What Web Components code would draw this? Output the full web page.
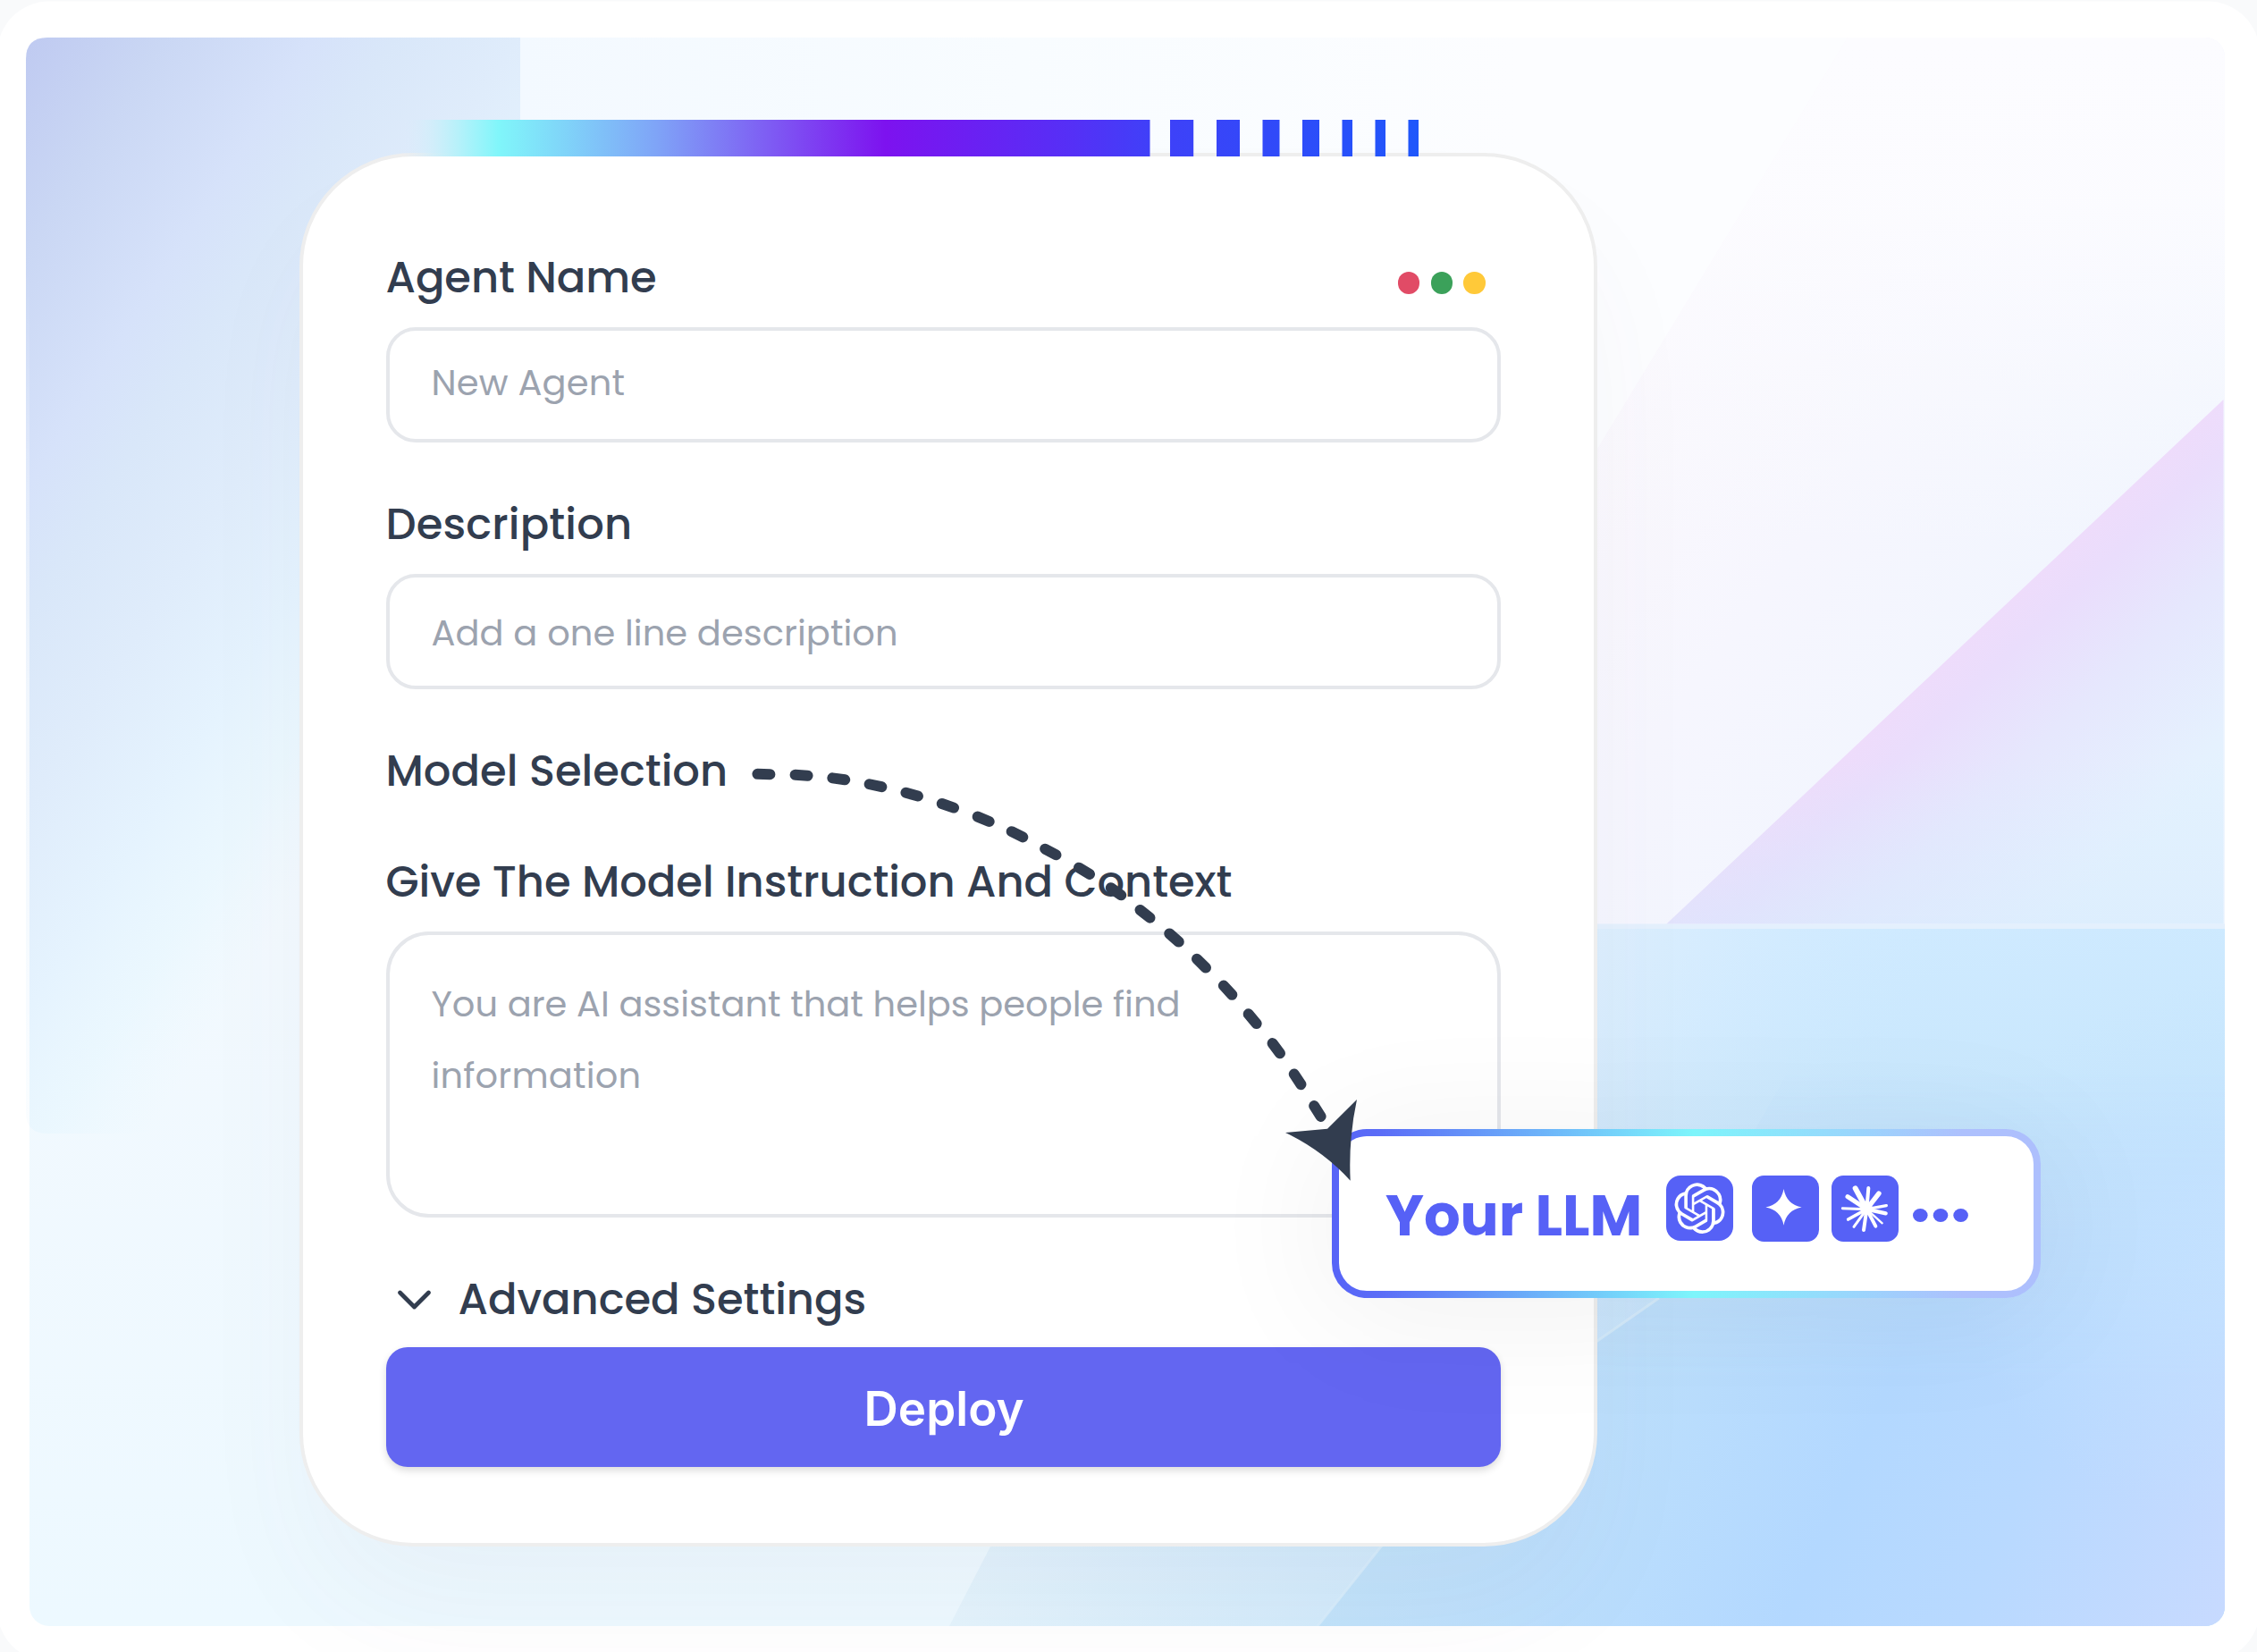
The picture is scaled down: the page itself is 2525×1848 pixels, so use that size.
<!DOCTYPE html>
<html lang="en">
<head>
<meta charset="utf-8">
<title>Agent builder</title>
<style>
  html, body { margin: 0; height: 100%; overflow: hidden; background: #f9fafb; }
  body { font-family: Poppins, Inter, "Open Sans", sans-serif; color: #323d4f; }
</style>
</head>
<body>
<agent-stage>
  <stage-backdrop slot="backdrop"></stage-backdrop>
  <accent-bar slot="overlay"></accent-bar>
  <agent-card>
    <form-field label="Agent Name" label-width="300.5" text-top="28"><fit-text width="213">New Agent</fit-text></form-field>
    <form-field label="Description" label-width="269.5" text-top="32"><fit-text width="518.5">Add a one line description</fit-text></form-field>
    <field-label><fit-text width="376.5">Model Selection</fit-text></field-label>
    <form-field tall label="Give The Model Instruction And Context" label-width="945" text-top="37"><fit-text width="835">You are AI assistant that helps people find</fit-text><fit-text width="230">information</fit-text></form-field>
    <advanced-toggle><fit-text width="454">Advanced Settings</fit-text></advanced-toggle>
    <deploy-button><fit-text width="176">Deploy</fit-text></deploy-button>
  </agent-card>
  <llm-badge slot="overlay"><fit-text width="283.5">Your LLM</fit-text></llm-badge>
  <dash-arrow slot="overlay"></dash-arrow>
</agent-stage>

<script>
const define = (name, html, setup) => {
  const tpl = document.createElement('template');
  tpl.innerHTML = html;
  customElements.define(name, class extends HTMLElement {
    constructor() {
      super();
      this.attachShadow({ mode: 'open' }).append(tpl.content.cloneNode(true));
    }
    connectedCallback() { if (setup) setup(this, this.shadowRoot); }
  });
};

define('agent-stage', `
<style>
  :host { display: grid; position: relative; width: 2525px; height: 1848px; overflow: hidden; }
  .content { grid-area: 1 / 1; padding: 171px 0 0 335px; position: relative; z-index: 1; }
  ::slotted([slot=backdrop]) { grid-area: 1 / 1; }
</style>
<slot name="backdrop"></slot>
<div class="content"><slot></slot></div>
<slot name="overlay"></slot>`);

define('stage-backdrop', `
<style>:host { display: block; } svg { display: block; }</style>
<svg width="2525" height="1848" viewBox="0 0 2525 1848">
  <defs>
    <clipPath id="panel"><rect x="33" y="42" width="2456" height="1777" rx="22"/></clipPath>
    <linearGradient id="base" gradientUnits="userSpaceOnUse" x1="0" y1="42" x2="0" y2="1819">
      <stop offset="0" stop-color="#f6fafe"/><stop offset=".5" stop-color="#f3f9fe"/><stop offset="1" stop-color="#edf9ff"/>
    </linearGradient>
    <linearGradient id="topband" gradientUnits="userSpaceOnUse" x1="582" y1="0" x2="1700" y2="0">
      <stop offset="0" stop-color="#f3f9ff"/><stop offset=".5" stop-color="#f8fcff"/><stop offset="1" stop-color="#fcfdff"/>
    </linearGradient>
    <linearGradient id="lilac" gradientUnits="userSpaceOnUse" x1="1760" y1="500" x2="2300" y2="900">
      <stop offset="0" stop-color="#fbf8fd"/><stop offset=".4" stop-color="#f6f6fe"/><stop offset="1" stop-color="#eff5fe"/>
    </linearGradient>
    <linearGradient id="lilacTop" gradientUnits="userSpaceOnUse" x1="0" y1="42" x2="0" y2="620">
      <stop offset="0" stop-color="#fcfcff"/><stop offset=".3" stop-color="#fcfcff" stop-opacity=".9"/><stop offset="1" stop-color="#f8faff" stop-opacity="0"/>
    </linearGradient>
    <linearGradient id="wedge" gradientUnits="userSpaceOnUse" x1="2176" y1="740" x2="2386" y2="963">
      <stop offset="0" stop-color="#eedcfb"/><stop offset=".14" stop-color="#eaddfc"/><stop offset=".45" stop-color="#e6e7fd"/><stop offset=".9" stop-color="#e5f1fe"/><stop offset="1" stop-color="#e4f2fe"/>
    </linearGradient>
    <linearGradient id="wedgeLow" gradientUnits="userSpaceOnUse" x1="0" y1="850" x2="0" y2="1033">
      <stop offset="0" stop-color="#d6eafd" stop-opacity="0"/><stop offset="1" stop-color="#d6eafd" stop-opacity=".5"/>
    </linearGradient>
    <linearGradient id="lower" gradientUnits="userSpaceOnUse" x1="1050" y1="1819" x2="1700" y2="1500">
      <stop offset="0" stop-color="#e5f4fc"/><stop offset=".55" stop-color="#d3ebfb"/><stop offset="1" stop-color="#cbe6f9"/>
    </linearGradient>
    <linearGradient id="right" gradientUnits="userSpaceOnUse" x1="2120" y1="1039" x2="2180" y2="1560">
      <stop offset="0" stop-color="#cfeaff"/><stop offset=".4" stop-color="#c8e7fd"/><stop offset="1" stop-color="#c0e1fc"/>
    </linearGradient>
    <linearGradient id="rightPale" gradientUnits="userSpaceOnUse" x1="1787" y1="1039" x2="2120" y2="1180">
      <stop offset="0" stop-color="#dfeffd" stop-opacity=".9"/><stop offset="1" stop-color="#cfeaff" stop-opacity="0"/>
    </linearGradient>
    <linearGradient id="deep" gradientUnits="userSpaceOnUse" x1="1560" y1="1500" x2="2489" y2="1900">
      <stop offset="0" stop-color="#c3e4f9"/><stop offset=".25" stop-color="#bcdffc"/><stop offset=".52" stop-color="#b3d8ff"/><stop offset=".7" stop-color="#b8d9ff"/><stop offset="1" stop-color="#c9daff"/>
    </linearGradient>
    <radialGradient id="edge" gradientUnits="userSpaceOnUse" cx="2489" cy="1400" r="300">
      <stop offset="0" stop-color="#c4e2ff" stop-opacity=".75"/><stop offset="1" stop-color="#c4e2ff" stop-opacity="0"/>
    </radialGradient>
    <linearGradient id="deepFade" gradientUnits="userSpaceOnUse" x1="0" y1="1200" x2="0" y2="1540">
      <stop offset="0" stop-color="#fff" stop-opacity="0"/><stop offset="1" stop-color="#fff"/>
    </linearGradient>
    <mask id="deepMask" maskUnits="userSpaceOnUse" x="1400" y="1000" width="1125" height="848"><rect x="1400" y="1000" width="1125" height="848" fill="url(#deepFade)"/></mask>
    <linearGradient id="corner" gradientUnits="userSpaceOnUse" x1="29" y1="42" x2="681" y2="457">
      <stop offset="0" stop-color="#bfcaf1"/><stop offset=".17" stop-color="#cad7f4"/><stop offset=".35" stop-color="#d6e2fa"/><stop offset=".45" stop-color="#d9e7f9"/><stop offset=".6" stop-color="#dfecfb"/><stop offset=".76" stop-color="#e5f3fe"/><stop offset=".88" stop-color="#e9f7fe" stop-opacity=".8"/><stop offset="1" stop-color="#ecf8ff" stop-opacity="0"/>
    </linearGradient>
    <linearGradient id="strip" gradientUnits="userSpaceOnUse" x1="0" y1="300" x2="0" y2="1268">
      <stop offset="0" stop-color="#fff" stop-opacity="0"/><stop offset=".5" stop-color="#fff" stop-opacity=".6"/><stop offset="1" stop-color="#fff" stop-opacity=".75"/>
    </linearGradient>
  </defs>
  <rect x="-3" y="1.500" width="2531" height="1857" rx="58" fill="#fff"/>
  <g clip-path="url(#panel)">
    <rect x="33" y="42" width="2456" height="1777" fill="url(#base)"/>
    <path d="M582 42H2489V1039H582z" fill="url(#topband)"/>
    <path d="M1787 502L2067 42H2489V1039H1600V790z" fill="url(#lilac)"/>
    <path d="M1787 502L2067 42H2489V700H1787z" fill="url(#lilacTop)"/>
    <path d="M1864.500 1033.500L2487.500 447V1033.500z" fill="url(#wedge)"/>
    <path d="M1864.500 1033.500L2059.500 850H2487.500V1033.500z" fill="url(#wedgeLow)"/>
    <path d="M1700 1033.500H2489V1039H1700z" fill="#e4f0fd"/>
    <path d="M1108 1730L1062 1819H2489V1400H1300z" fill="url(#lower)"/>
    <rect x="1700" y="1039" width="789" height="780" fill="url(#right)"/>
    <rect x="1700" y="1039" width="789" height="780" fill="url(#rightPale)"/>
    <path d="M1474 1819L1545 1730Q1660 1590 1787 1500L1856 1452L2000 1200H2489V1819z" fill="url(#deep)" mask="url(#deepMask)"/>
    <path d="M1474 1819L1545 1730Q1660 1590 1787 1500L1856 1452" fill="none" stroke="#d8edfb" stroke-width="3" opacity=".8"/>
    <rect x="2180" y="1100" width="309" height="610" fill="url(#edge)"/>
  </g>
  <path d="M53 42H582V1268H53Q29 1268 29 1244V66Q29 42 53 42z" fill="url(#corner)"/>
  <rect x="27" y="300" width="6" height="970" fill="url(#strip)"/>
</svg>`);

define('accent-bar', `
<style>
  :host { position: absolute; left: 450px; top: 134px; z-index: 2; display: block; }
  svg { display: block; }
</style>
<svg width="1138" height="41" viewBox="450 0 1138 41">
  <defs><linearGradient id="g" gradientUnits="userSpaceOnUse" x1="450" y1="0" x2="1588" y2="0">
    <stop offset="0" stop-color="#dcebfb" stop-opacity="0"/><stop offset=".03" stop-color="#cfeefa" stop-opacity=".85"/><stop offset=".055" stop-color="#b6f1fa"/><stop offset=".095" stop-color="#80f6fa"/>
    <stop offset=".25" stop-color="#7fa4f7"/><stop offset=".475" stop-color="#7d12ef"/><stop offset=".66" stop-color="#5530f6"/><stop offset=".735" stop-color="#4040f8"/>
    <stop offset=".86" stop-color="#304af9"/><stop offset="1" stop-color="#1f57fb"/>
  </linearGradient></defs>
  <path fill="url(#g)" d="M450 0H1286.500V41H450zM1309 0h26.200v41h-26.200zM1361 0h26v41h-26zM1412.500 0h19v41h-19zM1457 0h19v41h-19zM1501.500 0h11.500v41h-11.500zM1538.500 0h11.500v41h-11.500zM1575.500 0h11.500v41h-11.500z"/>
</svg>`);

define('agent-card', `
<style>
  :host { display: flex; flex-direction: column; box-sizing: border-box; position: relative;
    width: 1452px; height: 1559px; padding: 105px 105px 0 92.500px; background: #fff;
    border: 4px solid #eeeeee; border-radius: 127px;
    box-shadow: 0 80px 150px -20px rgba(90, 80, 120, .05); }
  .dots { position: absolute; right: 121.500px; top: 129px; display: flex; gap: 12.300px; }
  .dots i { width: 24.300px; height: 24.500px; border-radius: 50%; }
</style>
<div class="dots"><i style="background:#e14b66"></i><i style="background:#3ba15a"></i><i style="background:#ffc939"></i></div>
<slot></slot>`);

define('fit-text', `
<style>:host { display: block; white-space: nowrap; width: max-content; }</style>
<slot></slot>`, host => {
  // Spreads the letters so the drawn glyphs span the given width.
  host.fit = () => {
    const cs = getComputedStyle(host);
    const ctx = document.createElement('canvas').getContext('2d');
    ctx.font = cs.fontWeight + ' ' + cs.fontSize + ' ' + cs.fontFamily;
    const text = host.textContent;
    const m = ctx.measureText(text);
    const left = -m.actualBoundingBoxLeft;
    const rightGap = m.width - m.actualBoundingBoxRight;
    const natural = host.getBoundingClientRect().width - left - rightGap;
    host.style.letterSpacing = (host.getAttribute('width') - natural) / (text.length - 1) + 'px';
  };
});

define('field-label', `
<style>:host { display: block; font-size: 48px; font-weight: 500; line-height: 61px; height: 60px; margin-bottom: 64px; }
</style><slot></slot>`);

define('form-field', `
<style>
  :host { display: block; margin-bottom: 61px; }
  field-label { margin-bottom: 26px; }
  .box { box-sizing: border-box; width: 1247px; height: 129px; border: 4px solid #e5e7eb; border-radius: 33px;
    padding-left: 47px; font-size: 40px; font-weight: 400; line-height: 60px; color: #9ca3af; }
  :host([tall]) .box { height: 320px; border-radius: 48px; line-height: 80px; }
</style>
<field-label><fit-text></fit-text></field-label>
<div class="box"><slot></slot></div>`, (host, root) => {
  const label = root.querySelector('fit-text');
  label.textContent = host.getAttribute('label');
  label.setAttribute('width', host.getAttribute('label-width'));
  root.querySelector('.box').style.paddingTop = host.getAttribute('text-top') + 'px';
});

define('advanced-toggle', `
<style>
  :host { display: flex; height: 60px; line-height: 61px; font-size: 48px; font-weight: 500; padding-left: 10px; margin-bottom: 24px; }
  svg { width: 46px; height: 60px; margin-right: 25px; }
</style>
<svg viewBox="0 0 46 60" fill="none" stroke="#323d4f" stroke-width="4.800" stroke-linecap="round" stroke-linejoin="round"><path d="M5.500 23L21.500 39L37.500 23"/></svg>
<slot></slot>`);

define('deploy-button', `
<style>
  :host { display: flex; box-sizing: border-box; width: 1247px; height: 134px; padding: 33.500px 0 0 535px; border-radius: 24px;
    background: #6366f1; color: #fff; font: 600 53px/70px Inter, sans-serif; box-shadow: 0 4px 8px rgba(0,0,0,.14); }
</style><slot></slot>`);

define('model-tile', `
<style>:host { display: block; width: 75px; height: 74px; } svg { display: block; width: 75px; height: 74px; }</style>
<svg viewBox="0 0 225 222"></svg>`, (host, root) => {
  const openai = 'M22.2819 9.8211a5.9847 5.9847 0 0 0-.5157-4.9108 6.0462 6.0462 0 0 0-6.5098-2.9A6.0651 6.0651 0 0 0 4.9807 4.1818a5.9847 5.9847 0 0 0-3.9977 2.9 6.0462 6.0462 0 0 0 .7427 7.0966 5.98 5.98 0 0 0 .511 4.9107 6.051 6.051 0 0 0 6.5146 2.9001A5.9847 5.9847 0 0 0 13.2599 24a6.0557 6.0557 0 0 0 5.7718-4.2058 5.9894 5.9894 0 0 0 3.9977-2.9001 6.0557 6.0557 0 0 0-.7475-7.0729zm-9.022 12.6081a4.4755 4.4755 0 0 1-2.8764-1.0408l.1419-.0804 4.7783-2.7582a.7948.7948 0 0 0 .3927-.6813v-6.7369l2.02 1.1686a.071.071 0 0 1 .038.052v5.5826a4.504 4.504 0 0 1-4.4945 4.4944zm-9.6607-4.1254a4.4708 4.4708 0 0 1-.5346-3.0137l.142.0852 4.783 2.7582a.7712.7712 0 0 0 .7806 0l5.8428-3.3685v2.3324a.0804.0804 0 0 1-.0332.0615L9.74 19.9502a4.4992 4.4992 0 0 1-6.1408-1.6464zM2.3408 7.8956a4.485 4.485 0 0 1 2.3655-1.9728V11.6a.7664.7664 0 0 0 .3879.6765l5.8144 3.3543-2.0201 1.1685a.0757.0757 0 0 1-.071 0l-4.8303-2.7865A4.504 4.504 0 0 1 2.3408 7.872zm16.5963 3.8558L13.1038 8.364 15.1192 7.2a.0757.0757 0 0 1 .071 0l4.8303 2.7913a4.4944 4.4944 0 0 1-.6765 8.1042v-5.6772a.79.79 0 0 0-.407-.667zm2.0107-3.0231l-.142-.0852-4.7735-2.7818a.7759.7759 0 0 0-.7854 0L9.409 9.2297V6.8974a.0662.0662 0 0 1 .0284-.0615l4.8303-2.7866a4.4992 4.4992 0 0 1 6.6802 4.66zM8.3065 12.863l-2.02-1.1638a.0804.0804 0 0 1-.038-.0567V6.0742a4.4992 4.4992 0 0 1 7.3757-3.4537l-.142.0805L8.704 5.459a.7948.7948 0 0 0-.3927.6813zm1.0976-2.3654l2.602-1.4998 2.6069 1.4998v2.9994l-2.5974 1.4997-2.6067-1.4997Z';
  const rays = [[80,43,18],[124,42,12],[159,60,16],[184,101,10],[182,127,13],[170,160,7],[148,170,12],[108,183,12],[75,172,9],[56,147,11],[37,110,9],[54,71,15]];
  const kinds = {
    knot: '<rect width="225" height="219" rx="48" fill="#5661f6"/><g transform="translate(27.500 25) scale(7.080)"><path fill="#fff" d="' + openai + '"/></g>',
    spark: '<rect width="225" height="222" rx="40" fill="#5661f6"/><path fill="#fff" d="M106.500 45Q116 97 167 106.500Q116 116 106.500 167Q97 116 46 106.500Q97 97 106.500 45z"/>',
    burst: '<rect width="225" height="222" rx="40" fill="#5661f6"/><g stroke="#fff" stroke-linecap="round">' +
      rays.map(r => '<path d="M118 113L' + r[0] + ' ' + r[1] + '" stroke-width="' + r[2] + '"/>').join('') + '</g><circle cx="118" cy="112" r="20" fill="#fff"/>'
  };
  root.querySelector('svg').innerHTML = kinds[host.getAttribute('kind')];
});

define('llm-badge', `
<style>
  :host { position: absolute; left: 1490px; top: 1263px; z-index: 3; box-sizing: border-box; width: 793px; height: 189px;
    border: 8px solid transparent; border-radius: 39px;
    background: linear-gradient(#fff, #fff) padding-box, linear-gradient(90deg, #5764f7 0%, #5b6df7 7%, #7df5fb 51%, #adc0fd 89%, #adbffd 100%) border-box;
    box-shadow: 0 14px 150px 10px rgba(0,0,0,.055);
    display: flex; padding: 44px 0 0 52px; color: #5661f6; font-size: 64px; font-weight: 700; line-height: 80px; }
  .name { width: 314px; padding-top: 4.500px; }
  .tiles { display: flex; }
  .more { width: 62px; height: 15px; margin: 36.500px 0 0 16px; display: block; }
</style>
<div class="name"><slot></slot></div>
<div class="tiles">
  <model-tile kind="knot"></model-tile>
  <model-tile kind="spark" style="margin-left:21px"></model-tile>
  <model-tile kind="burst" style="margin-left:14px"></model-tile>
  <svg class="more" viewBox="0 0 62 15" fill="#5661f6"><ellipse cx="8.300" cy="7.500" rx="8.300" ry="7.500"/><ellipse cx="31" cy="7.500" rx="8.300" ry="7.500"/><ellipse cx="53.600" cy="7.500" rx="8.300" ry="7.500"/></svg>
</div>`);

define('dash-arrow', `
<style>:host { position: absolute; left: 830px; top: 850px; z-index: 4; display: block; } svg { display: block; }</style>
<svg width="700" height="480" viewBox="830 850 700 480">
  <path class="dashes" fill="none" stroke="#323d4f" stroke-width="12" stroke-linecap="round"/>
  <path fill="#323d4f" d="M1518 1230Q1508.500 1274 1510.700 1320.700Q1480 1287 1438 1267L1485 1262.700z"/>
</svg>`, (host, root) => {
  const p = [[854.4,866],[896.6,867.3],[938.3,871.3],[979.5,878.7],[1020.2,888.7],[1060.4,901.3],[1100.2,916.3],[1138,933.3],[1175.3,953],[1213,974.3],[1248.5,997.3],[1281,1022.3],[1313.5,1049],[1344,1077.7],[1373.6,1107.7],[1401.2,1139.7],[1427.8,1172.7],[1451.6,1207.3],[1473.9,1243]];
  root.querySelector('.dashes').setAttribute('d', p.map((c, i) => {
    const a = p[Math.max(i - 1, 0)], b = p[Math.min(i + 1, p.length - 1)];
    const len = Math.hypot(b[0] - a[0], b[1] - a[1]);
    const dx = (b[0] - a[0]) / len * 7, dy = (b[1] - a[1]) / len * 7;
    return 'M' + (c[0] - dx) + ' ' + (c[1] - dy) + 'L' + (c[0] + dx) + ' ' + (c[1] + dy);
  }).join(''));
});

// Letter fitting needs the finished layout of every nested root.
const fitAll = root => root.querySelectorAll('*').forEach(el => {
  if (el.fit) el.fit();
  if (el.shadowRoot) fitAll(el.shadowRoot);
});
fitAll(document);
</script>
</body>
</html>
